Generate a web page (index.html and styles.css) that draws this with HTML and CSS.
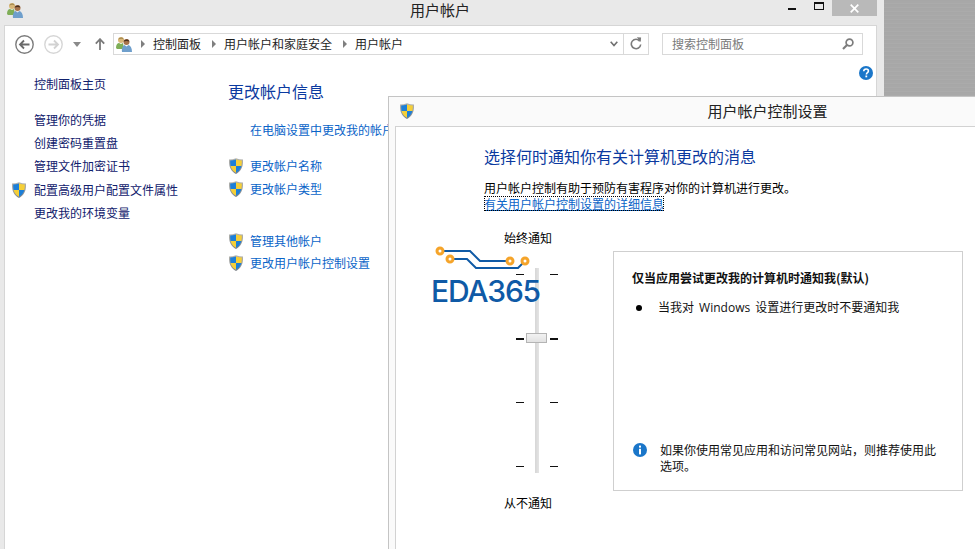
FILE: index.html
```html
<!DOCTYPE html>
<html lang="zh-CN">
<head>
<meta charset="utf-8">
<title>用户帐户</title>
<link rel="stylesheet" href="styles.css">
</head>
<body>
<svg class="defs" width="0" height="0" aria-hidden="true">
  <defs>
    <clipPath id="shield-clip"><path d="M7 1.400C9 2.100 11 2.400 12.800 2.500c.2 5.800-1.200 9.800-5.800 12.300C2.400 12.300 1 8.300 1.200 2.500 3 2.400 5 2.100 7 1.400z"/></clipPath>
    <linearGradient id="rim" x1="0" y1="0" x2="0" y2="1"><stop offset="0" stop-color="#b5b5b0"/><stop offset="1" stop-color="#7d838a"/></linearGradient>
    <symbol id="shield" viewBox="0 0 14 16">
      <path d="M7 .2C9.200 1 11.500 1.400 14 1.500c.3 6.500-1.400 11.300-7 14.500C1.400 12.800-.3 8 0 1.500 2.500 1.400 4.800 1 7 .2z" fill="url(#rim)"/>
      <g clip-path="url(#shield-clip)">
        <rect x="0" y="0" width="7" height="8" fill="#1c7fd8"/>
        <rect x="7" y="0" width="7" height="8" fill="#f5cf38"/>
        <rect x="0" y="8" width="7" height="8" fill="#f5cf38"/>
        <rect x="7" y="8" width="7" height="8" fill="#1c7fd8"/>
      </g>
    </symbol>
    <symbol id="users" viewBox="0 0 16 16">
      <circle cx="5" cy="4" r="3" fill="#d9b778"/>
      <path d="M2.500 3.500C2.800 1 7 .5 7.800 3.500 6 2.500 4 2.800 2.500 3.500z" fill="#a3884f"/>
      <path d="M0 12c0-3.500 1.500-5 3-5l2 1 2-1 1 6H1z" fill="#7fae57"/>
      <circle cx="10.500" cy="6" r="3" fill="#a8734a"/>
      <path d="M7.700 5.500C8 3 13 2.500 13.300 5.500 11.500 4.800 9.500 4.800 7.700 5.500z" fill="#4a2f1e"/>
      <path d="M6 16c-.5-4 1-6.500 2.500-7l2 1.500 2-1.500c2 .5 3.500 3 3.500 7z" fill="#6f9fcc"/>
    </symbol>
  </defs>
</svg>
<div class="desktop">
  <section class="window">
    <header class="window-title">
      <svg class="title-icon"><use href="#users"/></svg>
      <span class="window-name">用户帐户</span>
      <div class="window-controls">
        <span class="ctl ctl-min"><i></i></span>
        <span class="ctl ctl-max"><i></i></span>
        <span class="ctl-close">
          <svg width="9" height="9" viewBox="0 0 9 9"><path d="M.7.7l7.600 7.600M8.300.7L.7 8.300" stroke="#fff" stroke-width="1.700" fill="none"/></svg>
        </span>
      </div>
    </header>
    <div class="client">
      <div class="toolbar">
        <svg class="nav-btn" width="19" height="19" viewBox="0 0 19 19"><circle cx="9.500" cy="9.500" r="8.700" fill="none" stroke="#7c7c7c" stroke-width="1.400"/><path d="M14.500 9.500H5.500M9 5.500l-4 4 4 4" fill="none" stroke="#6a6a6a" stroke-width="1.800"/></svg>
        <svg class="nav-btn fwd" width="19" height="19" viewBox="0 0 19 19"><circle cx="9.500" cy="9.500" r="8.700" fill="none" stroke="#d6d6d6" stroke-width="1.400"/><path d="M4.500 9.500h9M10 5.500l4 4-4 4" fill="none" stroke="#d2d2d2" stroke-width="1.800"/></svg>
        <svg class="nav-drop" width="8" height="5" viewBox="0 0 8 5"><path d="M0 0h8L4 5z" fill="#8a8a8a"/></svg>
        <svg class="nav-up" width="10" height="12" viewBox="0 0 10 12"><path d="M5 12V1.500M.8 5.600L5 1.200l4.200 4.400" fill="none" stroke="#7a7a7a" stroke-width="1.800"/></svg>
        <div class="address">
          <svg class="addr-icon"><use href="#users"/></svg>
          <span class="crumb-arrow"></span><span class="crumb">控制面板</span>
          <span class="crumb-arrow"></span><span class="crumb">用户帐户和家庭安全</span>
          <span class="crumb-arrow"></span><span class="crumb">用户帐户</span>
          <svg class="addr-chevron" width="8" height="6" viewBox="0 0 8 6"><path d="M.7.8L4 4.600 7.300.8" fill="none" stroke="#707070" stroke-width="1.600"/></svg>
          <span class="addr-refresh">
            <svg width="12" height="13" viewBox="0 0 12 13"><path d="M9.800 4.200A4.700 4.700 0 1 0 10.700 7.500" fill="none" stroke="#7a7a7a" stroke-width="1.600"/><path d="M6.800 .2l4.300.4-.4 4.400z" fill="#7a7a7a"/></svg>
          </span>
        </div>
        <div class="search">
          <span>搜索控制面板</span>
          <svg width="12" height="12" viewBox="0 0 12 12"><circle cx="7.500" cy="4.500" r="3.400" fill="none" stroke="#7d7d7d" stroke-width="1.700"/><path d="M5 7L1 11" stroke="#7d7d7d" stroke-width="2.200"/></svg>
        </div>
      </div>
      <div class="content">
        <nav class="side">
          <a class="side-home">控制面板主页</a>
          <a class="side-item">管理你的凭据</a>
          <a class="side-item">创建密码重置盘</a>
          <a class="side-item">管理文件加密证书</a>
          <a class="side-item"><svg class="shield side-shield"><use href="#shield"/></svg>配置高级用户配置文件属性</a>
          <a class="side-item">更改我的环境变量</a>
        </nav>
        <main class="main">
          <h1 class="main-title">更改帐户信息</h1>
          <a class="main-link lead">在电脑设置中更改我的帐户信息</a>
          <a class="main-row first"><svg class="shield"><use href="#shield"/></svg>更改帐户名称</a>
          <a class="main-row"><svg class="shield"><use href="#shield"/></svg>更改帐户类型</a>
          <a class="main-row second"><svg class="shield"><use href="#shield"/></svg>管理其他帐户</a>
          <a class="main-row"><svg class="shield"><use href="#shield"/></svg>更改用户帐户控制设置</a>
        </main>
        <svg class="help" width="14" height="14" viewBox="0 0 14 14"><circle cx="7" cy="7" r="7" fill="#1a76c9"/><path d="M4.700 5.300C4.800 3.700 5.800 3 7.100 3c1.400 0 2.300.8 2.300 2 0 1.600-2 1.700-2 3.400" fill="none" stroke="#fff" stroke-width="1.600"/><rect x="6.400" y="9.500" width="1.800" height="1.800" fill="#fff"/></svg>
      </div>
    </div>
  </section>
  <div class="wallpaper"></div>

  <section class="dialog">
    <header class="dialog-title">
      <svg class="shield"><use href="#shield"/></svg>
      <span class="dialog-name">用户帐户控制设置</span>
    </header>
    <div class="dialog-client">
      <h2 class="dialog-heading">选择何时通知你有关计算机更改的消息</h2>
      <p class="dialog-text">用户帐户控制有助于预防有害程序对你的计算机进行更改。</p>
      <a class="dialog-link">有关用户帐户控制设置的详细信息</a>
      <div class="settings">
        <div class="slider-col">
          <div class="slider-label">始终通知</div>
          <div class="slider">
            <div class="track"></div>
            <div class="thumb"></div>
            <div class="tick-row"><i></i><i></i></div>
            <div class="tick-row thick"><i></i><i></i></div>
            <div class="tick-row"><i></i><i></i></div>
            <div class="tick-row"><i></i><i></i></div>
          </div>
          <div class="slider-label bottom">从不通知</div>
        </div>
        <aside class="panel">
          <div class="panel-top">
            <h3 class="panel-title">仅当应用尝试更改我的计算机时通知我(默认)</h3>
            <div class="bullet-row"><span class="bullet"></span><span>当我对 Windows 设置进行更改时不要通知我</span></div>
          </div>
          <div class="panel-note">
            <svg class="info" width="14" height="14" viewBox="0 0 14 14"><circle cx="7" cy="7" r="7" fill="#1a76c9"/><rect x="6" y="2.600" width="2" height="2" fill="#fff"/><rect x="6" y="5.800" width="2" height="5.600" fill="#fff"/></svg>
            <p>如果你使用常见应用和访问常见网站，则推荐使用此选项。</p>
          </div>
        </aside>
      </div>
    </div>
  </section>

  <div class="watermark">
    <svg class="watermark-art" width="100" height="30" viewBox="0 0 100 30">
      <path d="M8 5h30l10 10h30M18 13h17l9 9h42l7-7" fill="none" stroke="#0f5aa6" stroke-width="2"/>
      <g fill="#fff" stroke="#f5a42a" stroke-width="3">
        <circle cx="8" cy="5" r="3"/><circle cx="18" cy="13" r="3"/><circle cx="78" cy="15" r="3"/><circle cx="93" cy="15" r="3"/>
      </g>
    </svg>
    <div class="watermark-text">EDA365</div>
  </div>
</div>
</body>
</html>
```

FILE: styles.css
```css
* { box-sizing: border-box; }
html, body { margin: 0; padding: 0; }
body { font-family: "Noto Sans CJK SC", "Noto Sans", sans-serif; font-size: 12px; line-height: 16px; color: #000; }
.defs { position: absolute; }
h1, h2, h3, p { margin: 0; font-weight: 400; font-size: 12px; }
a { display: block; }

.desktop {
  position: relative; width: 975px; height: 549px; overflow: hidden; display: flex;
  background: #a9a9a9;
}
.wallpaper {
  flex: 1;
  background: repeating-linear-gradient(0deg, #a7a7a7 0 1px, #ababab 1px 2px, #a8a8a8 2px 4px);
}

/* main window */
.window { width: 884px; height: 549px; background: #e9e9e9; display: flex; flex-direction: column; flex: none; padding: 0 7px 0 4px; }
.window-title { height: 25px; flex: none; position: relative; text-align: center; margin-left: -4px; margin-right: -7px; }
.title-icon { position: absolute; left: 7px; top: 2px; width: 16px; height: 16px; }
.window-name { font-size: 15px; line-height: 20px; color: #222; display: block; margin-right: 4px; }
.window-controls { position: absolute; left: 788px; top: 0; display: flex; align-items: flex-start; }
.ctl { display: block; }
.ctl-min { width: 26px; padding-top: 8px; }
.ctl-min i { display: block; width: 8px; height: 2px; background: #111; }
.ctl-max { width: 18px; padding-top: 2px; }
.ctl-max i { display: block; width: 10px; height: 8px; border: 1px solid #111; border-top-width: 2px; }
.ctl-close { width: 45px; height: 16px; background: #b9b9b9; display: flex; align-items: center; justify-content: center; }

.client { flex: 1; background: #fff; border: 1px solid #d6d6d6; border-bottom: 0; display: flex; flex-direction: column; min-height: 0; }
.toolbar { height: 36px; flex: none; display: flex; align-items: center; padding-left: 10px; }
.nav-btn.fwd { margin-left: 10px; }
.nav-drop { margin-left: 10px; }
.nav-up { margin-left: 14px; }
.address { margin-left: 8px; width: 536px; height: 22px; border: 1px solid #d9d9d9; display: flex; align-items: center; padding-left: 2px; color: #1e1e1e; margin-top: -1px; }
.addr-icon { width: 16px; height: 16px; flex: none; }
.crumb-arrow { flex: none; margin-left: 9px; margin-right: 8px; width: 0; height: 0; border-left: 4px solid #7f7f7f; border-top: 4px solid transparent; border-bottom: 4px solid transparent; }
.crumb { flex: none; margin-right: 2px; }
.addr-chevron { margin-left: auto; margin-right: 5px; }
.addr-refresh { width: 25px; height: 100%; border-left: 1px solid #d9d9d9; display: flex; align-items: center; justify-content: center; }
.search { margin-left: 13px; width: 201px; height: 22px; border: 1px solid #d9d9d9; display: flex; align-items: center; justify-content: space-between; padding: 0 8px 0 9px; color: #7a7a7a; margin-top: -1px; }

.content { flex: 1; display: flex; min-height: 0; }
.side { width: 223px; flex: none; padding: 10px 0 0 29px; color: #10206c; }
.side-home { height: 23px; line-height: 23px; margin-bottom: 13px; }
.side-item { height: 23.2px; line-height: 23.2px; position: relative; }
.side-shield { position: absolute; left: -22px; top: 4px; }
.shield { width: 14px; height: 16px; flex: none; display: block; }

.main { flex: 1; padding-top: 17px; color: #0a64c8; }
.main-title { font-size: 16px; line-height: 24px; color: #0b3aa0; margin-bottom: 19px; }
.main-link.lead { padding-left: 22px; line-height: 16px; }
.main-row { display: flex; align-items: center; gap: 7px; height: 23px; padding-left: 1px; }
.main-row.first { margin-top: 16px; }
.main-row.second { margin-top: 29px; margin-bottom: -1px; }
.help { flex: none; margin: 4px 3px 0 0; }

/* dialog */
.dialog { position: absolute; left: 388px; top: 96px; width: 758px; height: 600px; background: #fafafa; border: 1px solid #c4c4c4; padding: 0 6px; display: flex; flex-direction: column; }
.dialog-title { height: 29px; flex: none; display: flex; align-items: center; justify-content: center; position: relative; padding-bottom: 2px; }
.dialog-title .shield { position: absolute; left: 5px; top: 6px; }
.dialog-name { font-size: 15px; line-height: 20px; color: #222; margin-left: 1px; }
.dialog-client { flex: 1; background: #fff; border: 1px solid #d2d2d2; padding: 17px 0 0 88px; }
.dialog-heading { font-size: 16px; line-height: 24px; color: #0b3aa0; margin-bottom: 12px; }
.dialog-text { line-height: 16px; }
.dialog-link { display: inline-block; height: 15px; line-height: 16px; color: #0a64c8; text-decoration: underline; outline: 1px dotted #000; outline-offset: -1px; vertical-align: top; }

.settings { display: flex; margin-left: -88px; margin-top: 18px; align-items: flex-start; }
.slider-col { width: 217px; padding-left: 108px; flex: none; }
.slider-label { line-height: 16px; }
.slider-label.bottom { margin-top: 22px; }
.slider { position: relative; width: 42px; height: 205px; margin: 22px 0 0 12px; padding: 6px 0; display: flex; flex-direction: column; justify-content: space-between; }
.track { position: absolute; left: 19px; top: 0; width: 4px; height: 100%; background: linear-gradient(90deg, #d6d6d6, #e4e4e4); }
.thumb { position: absolute; left: 10px; top: 65px; width: 21px; height: 10px; border: 1px solid #b4b4b4; background: linear-gradient(#f2f2f2, #e2e2e2); }
.tick-row { display: flex; justify-content: space-between; height: 1px; }
.tick-row i { display: block; width: 8px; height: 1px; background: #111; }
.tick-row.thick { height: 2px; }
.tick-row.thick i { height: 2px; }

.panel { margin-top: 21px; width: 350px; height: 240px; border: 1px solid #cfcfcf; padding: 17px 18px 17px; display: flex; flex-direction: column; justify-content: space-between; color: #111; }
.panel-title { font-weight: 700; line-height: 18px; margin-bottom: 13px; }
.bullet-row { display: flex; align-items: center; padding-left: 4px; gap: 16px; line-height: 16px; font-family: "Open Sans", "Noto Sans CJK SC", sans-serif; word-spacing: 2px; }
.bullet { width: 6px; height: 6px; border-radius: 50%; background: #000; flex: none; }
.panel-note { display: flex; align-items: flex-start; gap: 13px; padding-left: 0; }
.info { flex: none; margin: 1px 0 0 1px; }
.panel-note p { width: 280px; line-height: 15.500px; }

/* overlaid logo */
.watermark { position: absolute; left: 431px; top: 246px; width: 111px; }
.watermark-art { display: block; margin-left: 1px; }
.watermark-text { font-family: "Inter", "Liberation Sans", sans-serif; font-weight: 500; font-size: 30px; line-height: 26px; letter-spacing: -1.200px; color: #0f5aa6; margin-top: 2px; white-space: nowrap; }
```
